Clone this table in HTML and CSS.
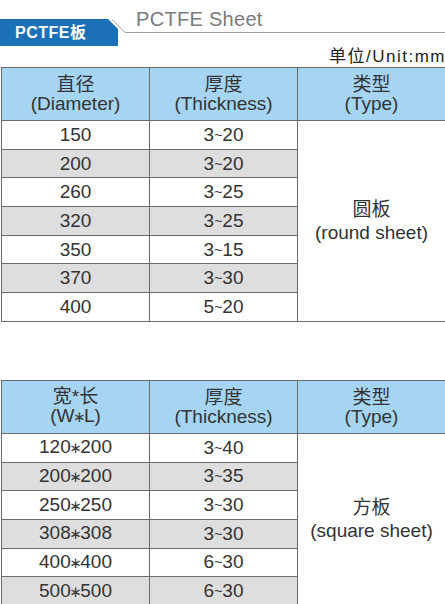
FILE: index.html
```html
<!DOCTYPE html>
<html lang="zh">
<head>
<meta charset="utf-8">
<title>PCTFE Sheet</title>
<link rel="stylesheet" href="styles.css">
</head>
<body>
<header class="title-bar">
  <div class="badge">PCTFE板</div>
  <svg class="connector" width="13" height="33" viewBox="0 0 13 33" aria-hidden="true"><line x1="0" y1="19.5" x2="13" y2="32.5" stroke="#a0a0a0" stroke-width="1"/></svg>
  <div class="title"><span>PCTFE Sheet</span></div>
</header>
<div class="unit">单位/Unit:mm</div>

<table class="spec">
  <colgroup><col class="c"><col class="c"><col class="c"></colgroup>
  <thead>
    <tr><th>直径<br>(Diameter)</th><th>厚度<br>(Thickness)</th><th>类型<br>(Type)</th></tr>
  </thead>
  <tbody>
    <tr><td>150</td><td>3<span class="tl">~</span>20</td><td class="type" rowspan="7">圆板<br>(round sheet)</td></tr>
    <tr class="alt"><td>200</td><td>3<span class="tl">~</span>20</td></tr>
    <tr><td>260</td><td>3<span class="tl">~</span>25</td></tr>
    <tr class="alt"><td>320</td><td>3<span class="tl">~</span>25</td></tr>
    <tr><td>350</td><td>3<span class="tl">~</span>15</td></tr>
    <tr class="alt"><td>370</td><td>3<span class="tl">~</span>30</td></tr>
    <tr><td>400</td><td>5<span class="tl">~</span>20</td></tr>
  </tbody>
</table>

<table class="spec second">
  <colgroup><col class="c"><col class="c"><col class="c"></colgroup>
  <thead>
    <tr><th>宽*长<br>(W<span class="ast">∗</span>L)</th><th>厚度<br>(Thickness)</th><th>类型<br>(Type)</th></tr>
  </thead>
  <tbody>
    <tr><td>120<span class="ast">∗</span>200</td><td>3<span class="tl">~</span>40</td><td class="type" rowspan="6">方板<br>(square sheet)</td></tr>
    <tr class="alt"><td>200<span class="ast">∗</span>200</td><td>3<span class="tl">~</span>35</td></tr>
    <tr><td>250<span class="ast">∗</span>250</td><td>3<span class="tl">~</span>30</td></tr>
    <tr class="alt"><td>308<span class="ast">∗</span>308</td><td>3<span class="tl">~</span>30</td></tr>
    <tr><td>400<span class="ast">∗</span>400</td><td>6<span class="tl">~</span>30</td></tr>
    <tr class="alt"><td>500<span class="ast">∗</span>500</td><td>6<span class="tl">~</span>30</td></tr>
  </tbody>
</table>
</body>
</html>
```

FILE: styles.css
```css
html, body {
  margin: 0;
  padding: 0;
  background: #ffffff;
}
body {
  width: 445px;
  font-family: "Liberation Sans", Arial, "Noto Sans CJK SC", sans-serif;
  color: #333333;
}
.title-bar {
  display: flex;
  align-items: flex-start;
  height: 46px;
}
.badge {
  flex: 0 0 auto;
  width: 118px;
  height: 27px;
  margin-top: 19px;
  box-sizing: border-box;
  padding-left: 15px;
  background: #1c70b6;
  color: #ffffff;
  font-family: "Liberation Sans", Arial, "Noto Sans CJK SC", sans-serif;
  font-weight: bold;
  font-size: 16px;
  line-height: 27px;
  letter-spacing: 0.5px;
  clip-path: polygon(0 0, 108px 0, 118px 10px, 118px 100%, 0 100%);
}
.connector {
  flex: 0 0 auto;
  display: block;
  margin-left: -6px;
}
.title {
  flex: 1 1 auto;
  height: 32px;
  border-bottom: 1px solid #a0a0a0;
  padding-left: 11px;
  color: #7a7a7a;
  font-size: 20px;
  line-height: 20px;
  letter-spacing: 0.3px;
}
.title span {
  display: block;
  padding-top: 9px;
}
.unit {
  text-align: right;
  font-size: 17px;
  line-height: 21px;
  letter-spacing: 1.5px;
  margin-right: -1px;
  color: #222222;
}
.spec {
  margin-left: 1px;
  width: 444px;
  border-collapse: collapse;
  table-layout: fixed;
  font-size: 19px;
  color: #333333;
}
.spec .c {
  width: 148px;
}
.spec th, .spec td {
  border: 1px solid #6a6a6a;
  padding: 0;
  text-align: center;
  vertical-align: middle;
}
.spec th {
  background: #a6d4f3;
  font-weight: normal;
  height: 52px;
  line-height: 19px;
}
.spec td {
  height: 27.7px;
  line-height: 20px;
}
.spec tr.alt td {
  background: #dedede;
}
.spec tr.alt td.type, .spec td.type {
  background: #ffffff;
  line-height: 23px;
}
.second {
  margin-top: 58px;
}
.tl {
  font-size: 14px;
  vertical-align: 1px;
}
.ast {
  font-family: "DejaVu Sans", sans-serif;
  font-size: 15px;
  margin: 0 -1.5px;
  color: #3a3a3a;
}
```
